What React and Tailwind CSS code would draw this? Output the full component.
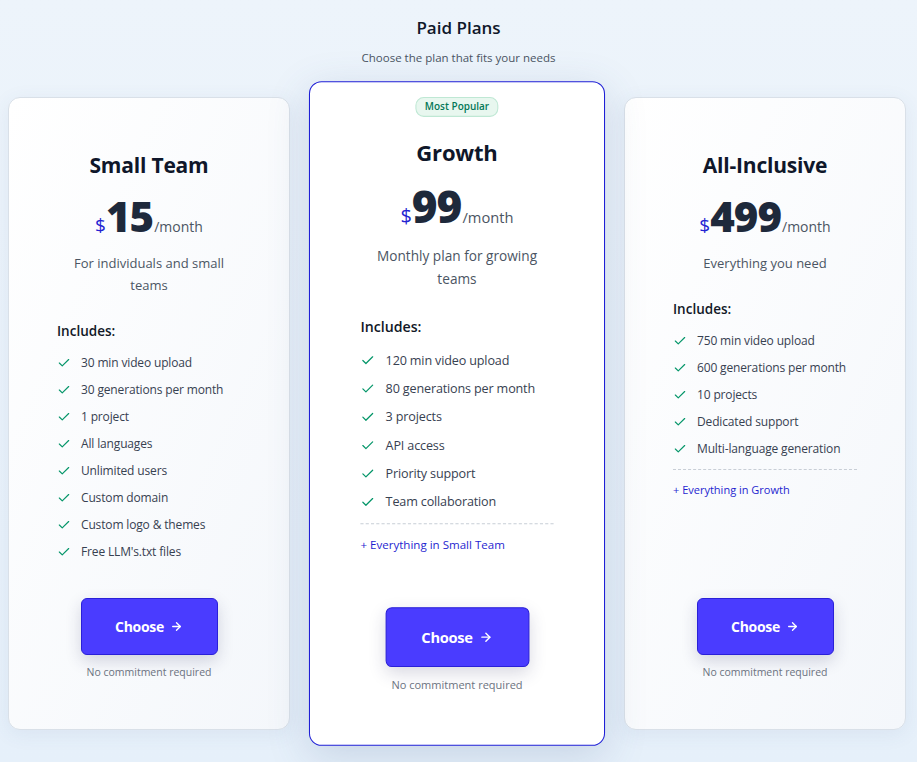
import React from 'react';
import { Check, ArrowRight } from 'lucide-react';

const plans = [
  {
    name: 'Small Team',
    price: '15',
    desc: 'For individuals and small teams',
    features: [
      '30 min video upload',
      '30 generations per month',
      '1 project',
      'All languages',
      'Unlimited users',
      'Custom domain',
      'Custom logo & themes',
      "Free LLM's.txt files",
    ],
  },
  {
    name: 'Growth',
    price: '99',
    desc: 'Monthly plan for growing teams',
    popular: true,
    extra: 'Everything in Small Team',
    features: [
      '120 min video upload',
      '80 generations per month',
      '3 projects',
      'API access',
      'Priority support',
      'Team collaboration',
    ],
  },
  {
    name: 'All-Inclusive',
    price: '499',
    desc: 'Everything you need',
    extra: 'Everything in Growth',
    features: [
      '750 min video upload',
      '600 generations per month',
      '10 projects',
      'Dedicated support',
      'Multi-language generation',
    ],
  },
];

const PlanCard = ({ plan }) => (
  <div
    className={`relative flex h-[633px] w-[282px] shrink-0 flex-col items-center rounded-xl border pt-[53px] pb-[49px] ${
      plan.popular
        ? 'z-10 scale-105 border-[#1f1fd6] bg-white shadow-[0_10px_40px_rgba(60,90,140,0.18)]'
        : 'border-[#d9e0e8] bg-gradient-to-br from-white to-[#f4f7fb] shadow-[0_4px_20px_rgba(60,90,140,0.08)]'
    }`}
  >
    {plan.popular && (
      <div className="absolute top-[14px] left-1/2 flex h-[19px] -translate-x-1/2 items-center rounded-lg border border-[#bfe8d4] bg-[#e8f7ef] px-[8px] text-[9.5px] font-semibold text-[#047857]">
        Most Popular
      </div>
    )}

    <h2 className="text-[21px] leading-[28px] font-bold tracking-[-0.2px] text-[#0f172a]">{plan.name}</h2>

    <div className="mt-4 flex items-baseline">
      <span className="text-[19px] leading-none text-[#2323d2]">$</span>
      <span className="text-[42px] leading-none font-extrabold tracking-[-1px] text-[#1e293b]">{plan.price}</span>
      <span className="ml-[1px] text-[14px] leading-none text-[#4b5563]">/month</span>
    </div>

    <p className="mt-[15px] max-w-[165px] text-center text-[13px] leading-[22px] text-[#4b5563]">{plan.desc}</p>

    <div className="mt-[25px] w-full px-12">
      <div className="text-[13.5px] leading-5 font-semibold text-[#111827]">Includes:</div>
      <ul className="mt-3 space-y-[7px]">
        {plan.features.map((f) => (
          <li key={f} className="flex items-center gap-[10px] text-[12px] leading-5 tracking-[-0.15px] text-[#374151]">
            <Check className="h-[14px] w-[14px] shrink-0 text-[#059669]" strokeWidth={2} />
            <span>{f}</span>
          </li>
        ))}
      </ul>
      {plan.extra && (
        <>
          <div className="mt-[10px] border-t border-dashed border-[#c8ced6]" />
          <div className="mt-3 text-[11px] leading-4 font-medium text-[#1f1fd0]">+ {plan.extra}</div>
        </>
      )}
    </div>

    <button className="mt-auto flex h-[57px] w-[137px] items-center justify-center gap-[6px] rounded-md border border-[#2a20d8] bg-[#4a3cff] text-[14px] font-bold tracking-[-0.3px] text-white shadow-[0_6px_16px_rgba(40,40,90,0.18)]">
      Choose
      <ArrowRight className="h-[13px] w-[13px]" strokeWidth={2.5} />
    </button>
    <div className="mt-[9px] text-[10.5px] leading-4 text-[#6b7280]">No commitment required</div>
  </div>
);

export default function App() {
  return (
    <div
      className="min-h-screen bg-gradient-to-b from-[#edf4fb] to-[#e6f0fa]"
      style={{ fontFamily: '"Open Sans", "Noto Sans", sans-serif' }}
    >
      <div className="pt-4 text-center">
        <h1 className="text-[17px] leading-6 font-semibold text-[#0f172a]">Paid Plans</h1>
        <p className="mt-[10px] text-[11.5px] leading-4 text-[#4b5563]">Choose the plan that fits your needs</p>
      </div>
      <div className="mt-[31px] flex items-start gap-[26px] pl-2">
        {plans.map((p) => (
          <PlanCard key={p.name} plan={p} />
        ))}
      </div>
    </div>
  );
}
